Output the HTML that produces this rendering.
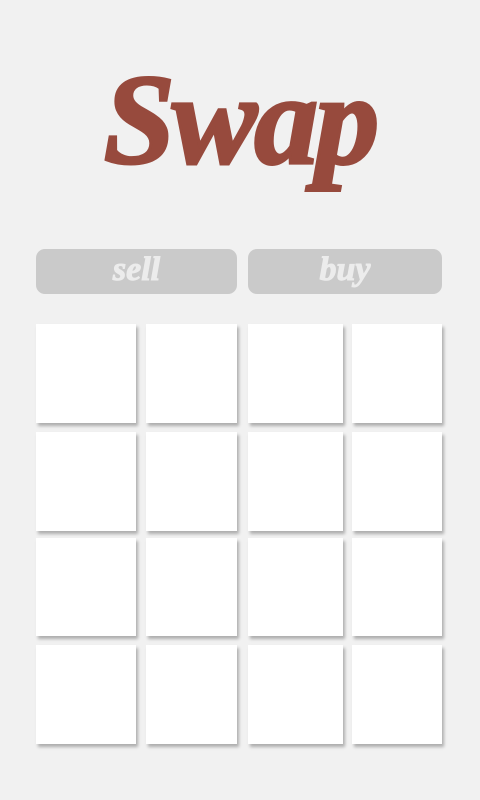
<!DOCTYPE html>
<html><head><style>
body{margin:0;width:480px;height:800px;background:#f1f1f1;position:relative;overflow:hidden;font-family:"Liberation Serif",serif}
.t{position:absolute;left:0;width:480px;top:40px;text-align:center;color:#974a3d;font-weight:bold;font-style:italic;font-size:128px;letter-spacing:-3px;line-height:160px;-webkit-text-stroke:3px #974a3d}
.b{position:absolute;top:249px;height:45px;background:#cacaca;border-radius:9px;color:#ececec;font-weight:bold;font-style:italic;font-size:34px;text-align:center;line-height:42px;-webkit-text-stroke:1px #ececec}
.c{position:absolute;background:#fff;box-shadow:2px 3px 3px rgba(0,0,0,.28)}
</style></head><body>
<div class="t">Swap</div>
<div class="b" style="left:36px;width:201px">sell</div>
<div class="b" style="left:248px;width:194px">buy</div>
<div class="c" style="left:36px;top:324px;width:100px;height:99px"></div>
<div class="c" style="left:146px;top:324px;width:91px;height:99px"></div>
<div class="c" style="left:248px;top:324px;width:95px;height:99px"></div>
<div class="c" style="left:352px;top:324px;width:90px;height:99px"></div>
<div class="c" style="left:36px;top:432px;width:100px;height:99px"></div>
<div class="c" style="left:146px;top:432px;width:91px;height:99px"></div>
<div class="c" style="left:248px;top:432px;width:95px;height:99px"></div>
<div class="c" style="left:352px;top:432px;width:90px;height:99px"></div>
<div class="c" style="left:36px;top:538px;width:100px;height:98px"></div>
<div class="c" style="left:146px;top:538px;width:91px;height:98px"></div>
<div class="c" style="left:248px;top:538px;width:95px;height:98px"></div>
<div class="c" style="left:352px;top:538px;width:90px;height:98px"></div>
<div class="c" style="left:36px;top:645px;width:100px;height:99px"></div>
<div class="c" style="left:146px;top:645px;width:91px;height:99px"></div>
<div class="c" style="left:248px;top:645px;width:95px;height:99px"></div>
<div class="c" style="left:352px;top:645px;width:90px;height:99px"></div>
</body></html>
